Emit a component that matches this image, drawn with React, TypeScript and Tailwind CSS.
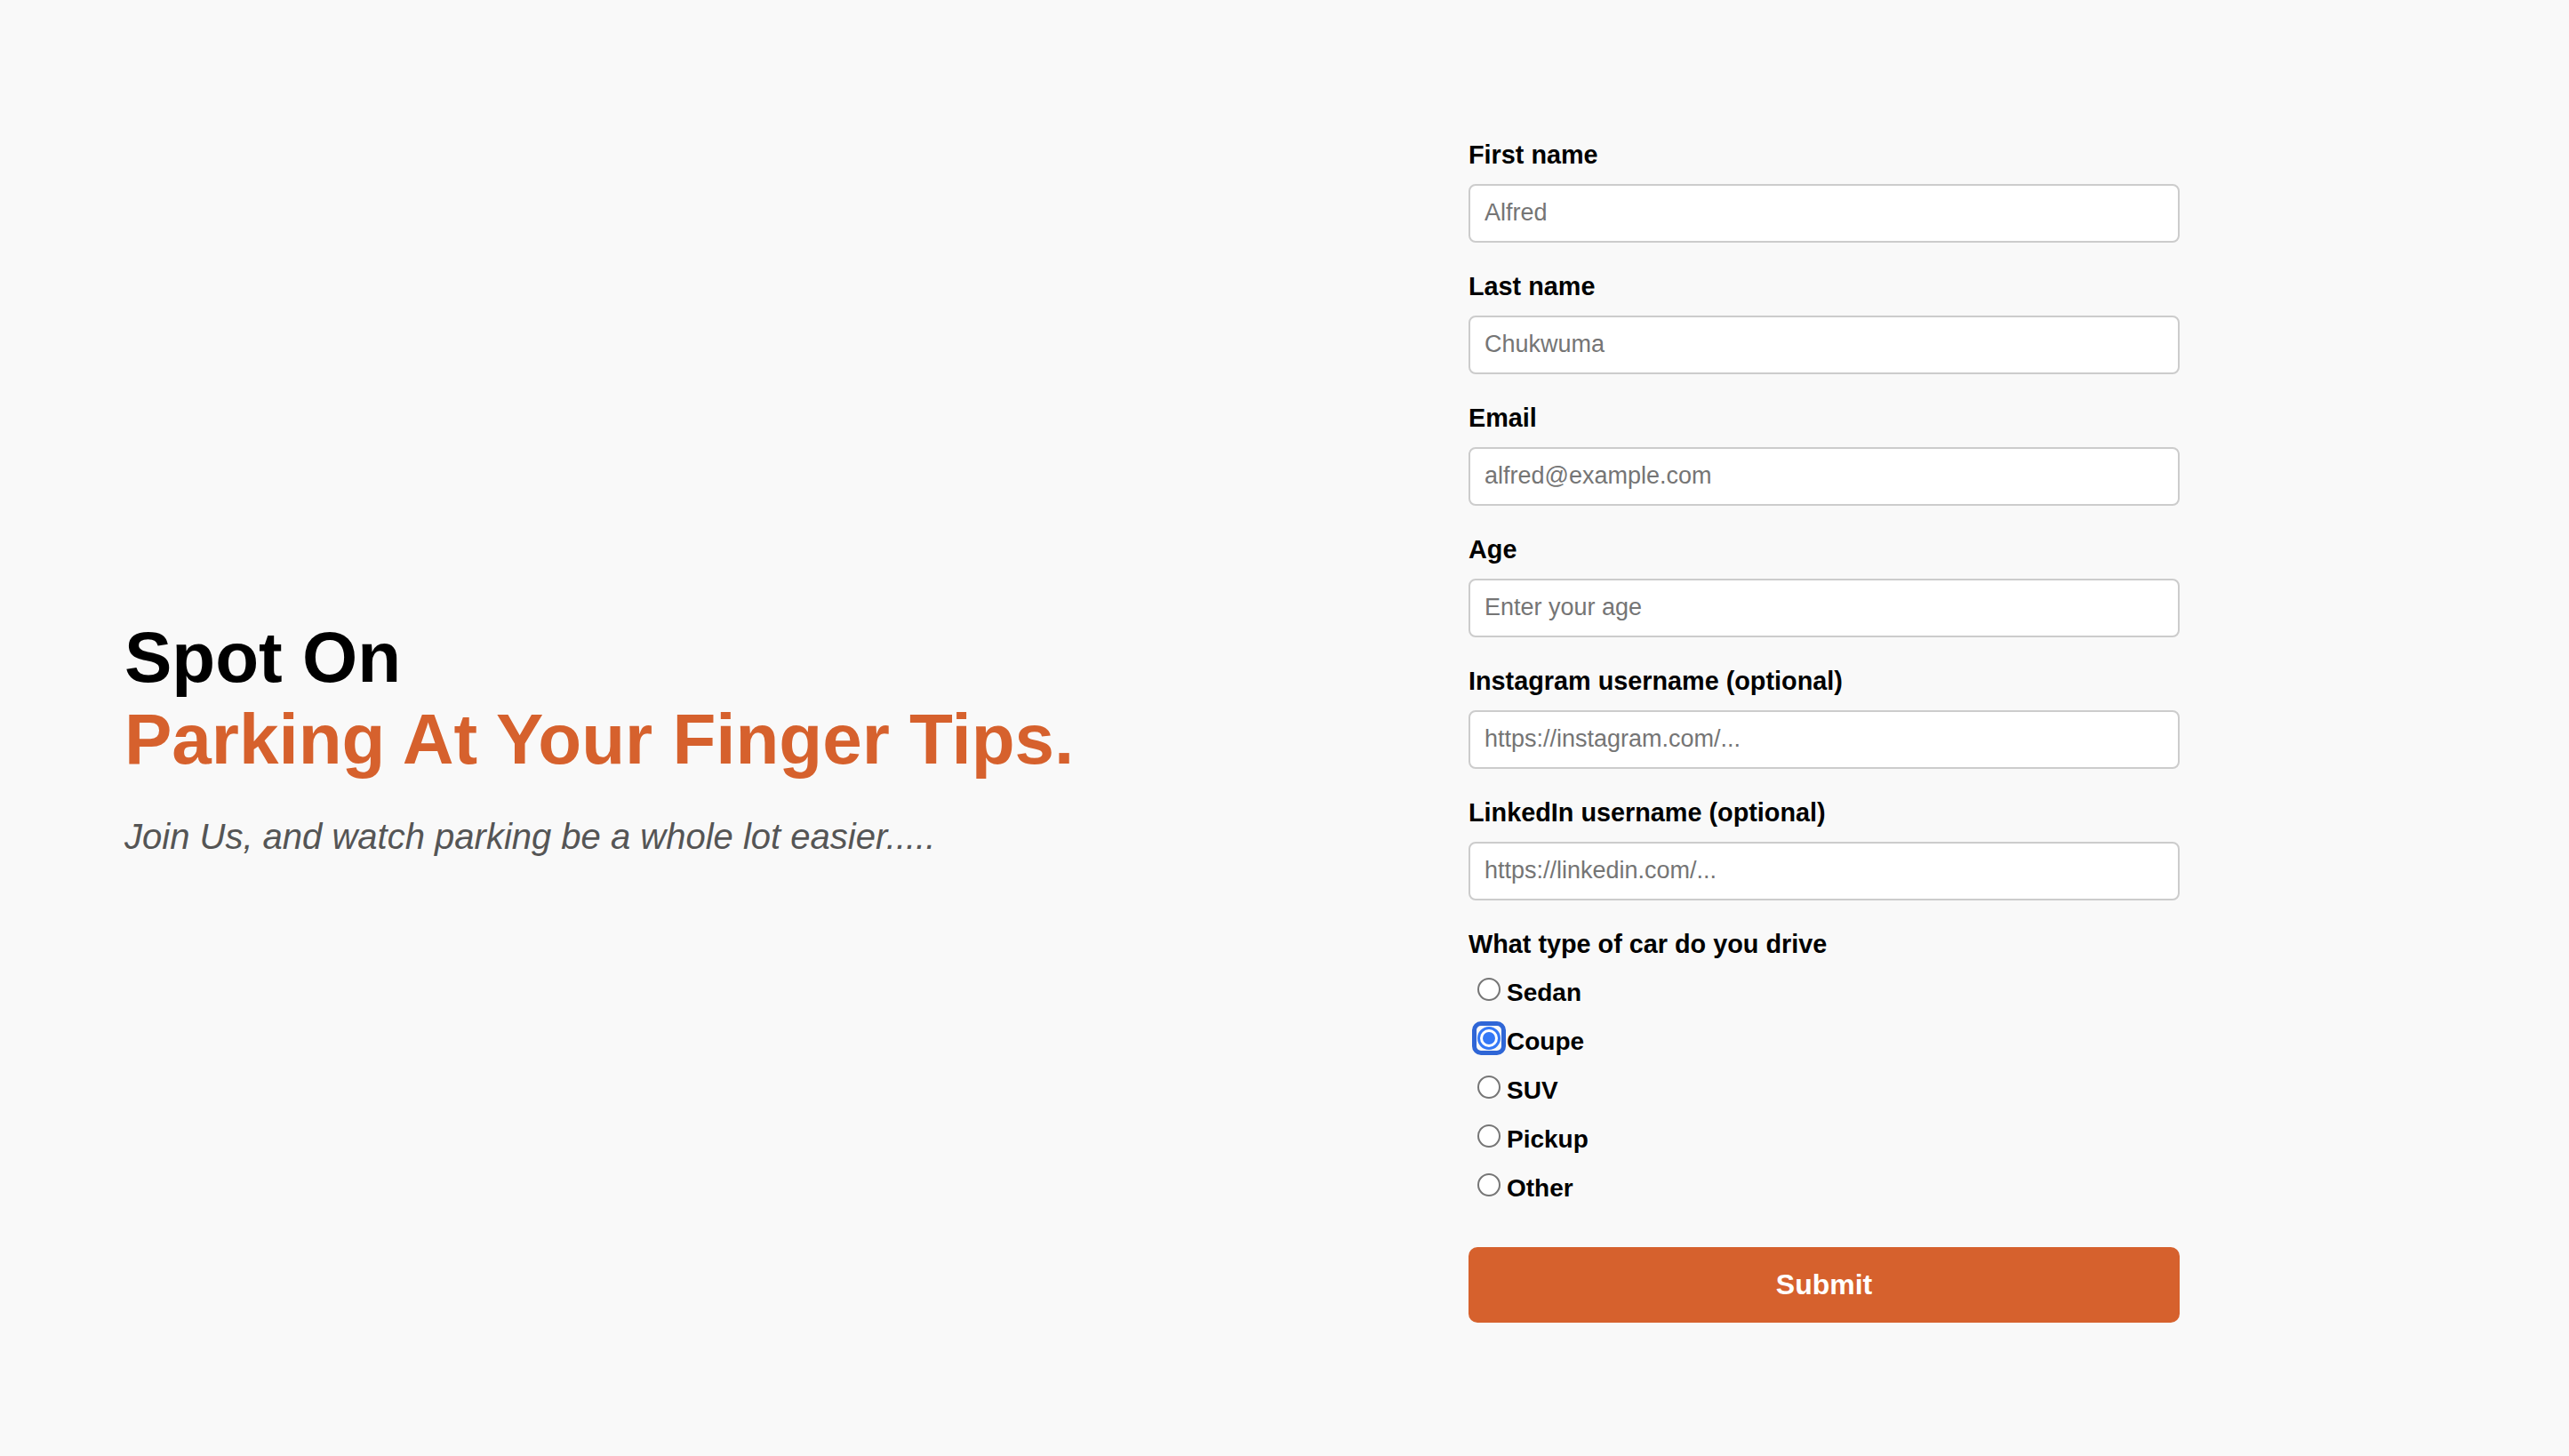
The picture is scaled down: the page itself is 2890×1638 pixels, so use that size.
import { useState } from 'react'

// ── Form fields — label, placeholder, input type ─────────────────────────────
const FIELDS = [
  { id: 'first', label: 'First name', placeholder: 'Alfred', type: 'text' },
  { id: 'last', label: 'Last name', placeholder: 'Chukwuma', type: 'text' },
  { id: 'email', label: 'Email', placeholder: 'alfred@example.com', type: 'email' },
  { id: 'age', label: 'Age', placeholder: 'Enter your age', type: 'number' },
  { id: 'instagram', label: 'Instagram username (optional)', placeholder: 'https://instagram.com/...', type: 'url' },
  { id: 'linkedin', label: 'LinkedIn username (optional)', placeholder: 'https://linkedin.com/...', type: 'url' },
]

const CARS = ['Sedan', 'Coupe', 'SUV', 'Pickup', 'Other']

function Radio({ checked }: { checked: boolean }) {
  if (!checked) {
    return (
      <span className="mb-[8px] ml-[10px] mr-[7px] inline-block h-[26px] w-[26px] shrink-0 rounded-full border-[2px] border-[#767676] bg-white" />
    )
  }
  return (
    <span className="relative mb-[8px] ml-[10px] mr-[7px] inline-flex h-[26px] w-[26px] shrink-0 items-center justify-center rounded-full border-[3px] border-[#3478f6] bg-white">
      {/* focus ring */}
      <span className="absolute -inset-[9px] rounded-[10px] border-[5px] border-[#2f66d6]" />
      <span className="h-[14px] w-[14px] rounded-full bg-[#3478f6]" />
    </span>
  )
}

export default function App() {
  const [car, setCar] = useState('Coupe')

  return (
    <div
      className="flex min-h-screen items-center bg-[#f9f9f9] pl-[140px] pr-[438px] text-black"
      style={{ fontFamily: '"Liberation Sans", Arial, sans-serif' }}
    >
      {/* Hero copy */}
      <div className="flex-1 pt-[19px]">
        <h1 className="text-[80px] font-bold leading-[92px]">
          <span className="block">Spot On</span>
          <span className="block text-[#d6612d]">Parking At Your Finger Tips.</span>
        </h1>
        <p className="mt-[40px] text-[40px] italic leading-[46px] text-[#555555]">
          Join Us, and watch parking be a whole lot easier.....
        </p>
      </div>

      {/* Sign-up form */}
      <form className="flex w-[800px] flex-col pt-[7px]" onSubmit={(e) => e.preventDefault()}>
        {FIELDS.map((f) => (
          <div key={f.id} className="mb-[33px] flex flex-col">
            <label htmlFor={f.id} className="text-[28.8px] font-bold leading-[32px]">
              {f.label}
            </label>
            <input
              id={f.id}
              type={f.type}
              placeholder={f.placeholder}
              className="mt-[17px] h-[66px] rounded-[8px] border-[2px] border-[#cccccc] bg-white px-[16px] text-[27px] outline-none placeholder:text-[#757575]"
            />
          </div>
        ))}

        <p className="text-[28.8px] font-bold leading-[32px]">What type of car do you drive</p>
        <div className="mt-[12px] flex flex-col">
          {CARS.map((c) => (
            <label
              key={c}
              className="flex h-[55px] cursor-pointer items-center text-[28px] font-bold leading-[32px]"
              onClick={() => setCar(c)}
            >
              <Radio checked={car === c} />
              {c}
            </label>
          ))}
        </div>

        <button
          type="submit"
          className="mt-[38px] h-[85px] w-full rounded-[10px] bg-[#d6612d] text-[32px] font-bold text-white"
        >
          Submit
        </button>
      </form>
    </div>
  )
}
